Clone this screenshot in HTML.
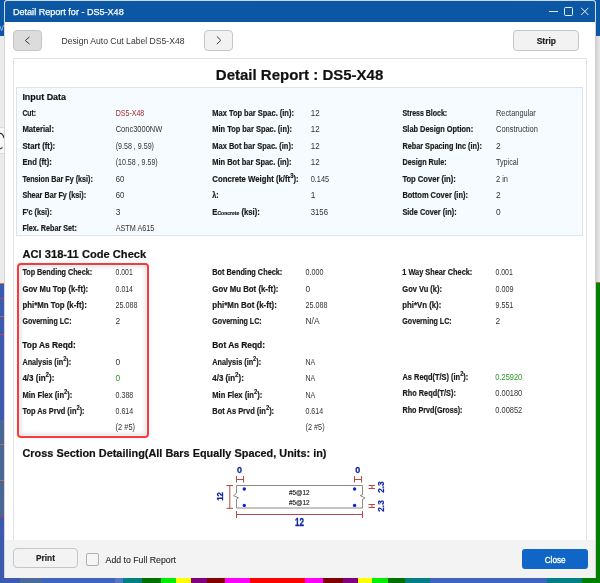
<!DOCTYPE html><html><head><meta charset="utf-8"><style>
*{margin:0;padding:0;box-sizing:border-box}
html,body{width:600px;height:583px;overflow:hidden;background:#ebebeb;font-family:"Liberation Sans",sans-serif;position:relative}
div,svg{position:absolute}
.btn{border:1px solid #c6c6c6;border-radius:4px;background:#f2f2f2}
text{font-family:"Liberation Sans",sans-serif}
</style></head><body>
<div style="left:0;top:0;width:600px;height:36px;background:#0c57a4"></div>
<div style="left:0;top:283px;width:6px;height:300px;background:#3b5bb0;border-top:1px solid #d08040"></div>
<div style="left:0;top:420px;width:6px;height:96px;background:#4a6694"></div>
<div style="left:0;top:298px;width:6px;height:1px;background:#c04050"></div>
<div style="left:0;top:316px;width:6px;height:1px;background:#c06040"></div>
<div style="left:0;top:334px;width:6px;height:1px;background:#c04050"></div>
<div style="left:0;top:444px;width:6px;height:1px;background:#b07040"></div>
<div style="left:0;top:480px;width:6px;height:1px;background:#c07040"></div>
<div style="left:0;top:516px;width:6px;height:1px;background:#d03040"></div>
<div style="left:0;top:127px;width:4px;height:27px;background:#f7f7f7;border-top:1px solid #dcdcdc;border-bottom:1px solid #dcdcdc"></div>
<svg style="left:0;top:20px" width="5" height="140"><path d="M0 6L1.6 11L3.6 5" stroke="#8fb0d8" stroke-width="1" fill="none"/><path d="M0 113.5Q2.5 113 4 118" stroke="#333" stroke-width="1.3" fill="none"/><path d="M0 129L2.5 127.5" stroke="#444" stroke-width="1.2" fill="none"/></svg>
<div style="left:596px;top:36px;width:4px;height:246px;background:linear-gradient(to right,#d2d2d2,#e9e9e9)"></div>
<div style="left:594px;top:282px;width:6px;height:301px;background:#008000;border-top:1px solid #e05050"></div>
<div style="left:4px;top:0px;width:592px;height:579px;background:#fff;border:1px solid rgba(190,210,235,0.8);border-bottom:none;border-radius:3px 3px 0 0"></div>
<div style="left:4px;top:22px;width:1px;height:556px;background:#d6d6d6"></div>
<div style="left:595px;top:22px;width:1px;height:556px;background:#d0d0d0"></div>
<div style="left:5px;top:1px;width:590px;height:21px;background:#0c57a4;border-radius:2px 2px 0 0"></div>
<div style="left:549px;top:11px;width:9px;height:1px;background:rgba(255,255,255,0.85)"></div>
<div style="left:564px;top:7px;width:9px;height:9px;border:1px solid rgba(255,255,255,0.9);border-radius:1.5px"></div>
<svg style="left:580px;top:7px" width="10" height="10"><path d="M1.2 0.8L8.4 8M8.4 0.8L1.2 8" stroke="rgba(255,255,255,0.9)" stroke-width="1"/></svg>
<div class="btn" style="left:13px;top:30px;width:29px;height:21px;background:#dcdcdc"></div>
<svg style="left:23px;top:35px" width="8" height="11"><path d="M6.5 1.9L2.3 5.5L6.5 9.1" stroke="#3a3a3a" stroke-width="1" fill="none"/></svg>
<div class="btn" style="left:204px;top:30px;width:29px;height:21px"></div>
<svg style="left:215px;top:35px" width="8" height="11"><path d="M1.9 1.5L5.8 5.3L1.9 9.1" stroke="#3a3a3a" stroke-width="1" fill="none"/></svg>
<div class="btn" style="left:513px;top:30px;width:66px;height:21px"></div>
<div style="left:13px;top:58px;width:574px;height:482px;border:1px solid #e3e3e3;border-bottom:none"></div>
<div style="left:16px;top:87px;width:567px;height:149px;background:#f5fbfe;border:1px solid #dfe3e6"></div>
<div style="left:16.7px;top:262.7px;width:132.6px;height:175.3px;border:2px solid #f83a3a;border-radius:4px;box-shadow:inset 0 0 0 1px #edf6f6,inset 0 0 5px 1px rgba(0,0,0,0.17),0 0 4px rgba(0,0,0,0.07)"></div>
<div style="left:5px;top:540px;width:590px;height:38px;background:#f3f3f3"></div>
<div class="btn" style="left:13px;top:548px;width:65px;height:20px;background:#f3f3f3"></div>
<div style="left:86px;top:553px;width:13px;height:13px;border:1px solid #b0b0b0;border-radius:2px;background:#f5f5f5"></div>
<div style="left:522px;top:549px;width:66px;height:20px;background:#1066c6;border-radius:3px"></div>
<div style="left:0px;top:578px;width:20px;height:5px;background:#3b5bb0"></div>
<div style="left:20px;top:578px;width:22px;height:5px;background:#4a6a98"></div>
<div style="left:42px;top:578px;width:73px;height:5px;background:#4062c0"></div>
<div style="left:115px;top:578px;width:8px;height:5px;background:#5575c8"></div>
<div style="left:123px;top:578px;width:19px;height:5px;background:#008080"></div>
<div style="left:142px;top:578px;width:19px;height:5px;background:#007000"></div>
<div style="left:161px;top:578px;width:15px;height:5px;background:#00ee00"></div>
<div style="left:176px;top:578px;width:15px;height:5px;background:#ffff00"></div>
<div style="left:191px;top:578px;width:16px;height:5px;background:#800080"></div>
<div style="left:207px;top:578px;width:18px;height:5px;background:#800000"></div>
<div style="left:225px;top:578px;width:25px;height:5px;background:#ff00ff"></div>
<div style="left:250px;top:578px;width:55px;height:5px;background:#ff0000"></div>
<div style="left:305px;top:578px;width:18px;height:5px;background:#ff00ff"></div>
<div style="left:323px;top:578px;width:20px;height:5px;background:#800000"></div>
<div style="left:343px;top:578px;width:15px;height:5px;background:#800080"></div>
<div style="left:358px;top:578px;width:14px;height:5px;background:#ffff00"></div>
<div style="left:372px;top:578px;width:16px;height:5px;background:#00ee00"></div>
<div style="left:388px;top:578px;width:17px;height:5px;background:#007000"></div>
<div style="left:405px;top:578px;width:25px;height:5px;background:#008080"></div>
<div style="left:430px;top:578px;width:117px;height:5px;background:#4062c0"></div>
<div style="left:547px;top:578px;width:35px;height:5px;background:#008080"></div>
<div style="left:582px;top:578px;width:18px;height:5px;background:#008000"></div>
<svg style="left:0;top:0;will-change:transform" width="600" height="583" viewBox="0 0 600 583"><text x="13" y="15" font-size="9.2" fill="#fff" textLength="110.7" lengthAdjust="spacingAndGlyphs" stroke="#fff" stroke-width="0.25">Detail Report for - DS5-X48</text>
<text x="61.5" y="44" font-size="8.8" fill="#333" textLength="123" lengthAdjust="spacingAndGlyphs" >Design Auto Cut Label DS5-X48</text>
<text x="536.7" y="43.5" font-size="9" fill="#222" font-weight="bold" stroke="#222" stroke-width="0.2" textLength="19.3" lengthAdjust="spacingAndGlyphs" >Strip</text>
<text x="215.8" y="80" font-size="15" fill="#111" font-weight="bold" stroke="#111" stroke-width="0.2" textLength="167.5" lengthAdjust="spacingAndGlyphs" >Detail Report : DS5-X48</text>
<text x="22.4" y="100" font-size="9.5" fill="#111" font-weight="bold" stroke="#111" stroke-width="0.2" textLength="43.6" lengthAdjust="spacingAndGlyphs" >Input Data</text>
<text x="22.4" y="116" font-size="8.4" fill="#1b1b1b" font-weight="bold" stroke="#1b1b1b" stroke-width="0.2" textLength="13.7" lengthAdjust="spacingAndGlyphs" >Cut:</text>
<text x="115.7" y="116" font-size="8.4" fill="#a03030" textLength="28.6" lengthAdjust="spacingAndGlyphs" >DS5-X48</text>
<text x="22.4" y="132" font-size="8.4" fill="#1b1b1b" font-weight="bold" stroke="#1b1b1b" stroke-width="0.2" textLength="31.7" lengthAdjust="spacingAndGlyphs" >Material:</text>
<text x="115.7" y="132" font-size="8.4" fill="#333333" textLength="46.6" lengthAdjust="spacingAndGlyphs" >Conc3000NW</text>
<text x="22.4" y="149" font-size="8.4" fill="#1b1b1b" font-weight="bold" stroke="#1b1b1b" stroke-width="0.2" textLength="32.7" lengthAdjust="spacingAndGlyphs" >Start (ft):</text>
<text x="115.7" y="149" font-size="8.4" fill="#333333" textLength="38.3" lengthAdjust="spacingAndGlyphs" >(9.58 , 9.59)</text>
<text x="22.4" y="165" font-size="8.4" fill="#1b1b1b" font-weight="bold" stroke="#1b1b1b" stroke-width="0.2" textLength="29.4" lengthAdjust="spacingAndGlyphs" >End (ft):</text>
<text x="115.7" y="165" font-size="8.4" fill="#333333" textLength="42" lengthAdjust="spacingAndGlyphs" >(10.58 , 9.59)</text>
<text x="22.4" y="182" font-size="8.4" fill="#1b1b1b" font-weight="bold" stroke="#1b1b1b" stroke-width="0.2" textLength="70.4" lengthAdjust="spacingAndGlyphs" >Tension Bar Fy (ksi):</text>
<text x="115.7" y="182" font-size="8.4" fill="#333333" textLength="8.6" lengthAdjust="spacingAndGlyphs" >60</text>
<text x="22.4" y="198" font-size="8.4" fill="#1b1b1b" font-weight="bold" stroke="#1b1b1b" stroke-width="0.2" textLength="63.7" lengthAdjust="spacingAndGlyphs" >Shear Bar Fy (ksi):</text>
<text x="115.7" y="198" font-size="8.4" fill="#333333" textLength="8.6" lengthAdjust="spacingAndGlyphs" >60</text>
<text x="22.4" y="215" font-size="8.4" fill="#1b1b1b" font-weight="bold" stroke="#1b1b1b" stroke-width="0.2" textLength="29.4" lengthAdjust="spacingAndGlyphs" >F'c (ksi):</text>
<text x="115.7" y="215" font-size="8.4" fill="#333333" >3</text>
<text x="22.4" y="231" font-size="8.4" fill="#1b1b1b" font-weight="bold" stroke="#1b1b1b" stroke-width="0.2" textLength="54.4" lengthAdjust="spacingAndGlyphs" >Flex. Rebar Set:</text>
<text x="115.7" y="231" font-size="8.4" fill="#333333" textLength="38.6" lengthAdjust="spacingAndGlyphs" >ASTM A615</text>
<text x="212.3" y="116" font-size="8.4" fill="#1b1b1b" font-weight="bold" stroke="#1b1b1b" stroke-width="0.2" textLength="81.6" lengthAdjust="spacingAndGlyphs" >Max Top bar Spac. (in):</text>
<text x="310.7" y="116" font-size="8.4" fill="#333333" textLength="8.9" lengthAdjust="spacingAndGlyphs" >12</text>
<text x="212.3" y="132" font-size="8.4" fill="#1b1b1b" font-weight="bold" stroke="#1b1b1b" stroke-width="0.2" textLength="79.6" lengthAdjust="spacingAndGlyphs" >Min Top bar Spac. (in):</text>
<text x="310.7" y="132" font-size="8.4" fill="#333333" textLength="8.9" lengthAdjust="spacingAndGlyphs" >12</text>
<text x="212.3" y="149" font-size="8.4" fill="#1b1b1b" font-weight="bold" stroke="#1b1b1b" stroke-width="0.2" textLength="81.1" lengthAdjust="spacingAndGlyphs" >Max Bot bar Spac. (in):</text>
<text x="310.7" y="149" font-size="8.4" fill="#333333" textLength="8.9" lengthAdjust="spacingAndGlyphs" >12</text>
<text x="212.3" y="165" font-size="8.4" fill="#1b1b1b" font-weight="bold" stroke="#1b1b1b" stroke-width="0.2" textLength="79.2" lengthAdjust="spacingAndGlyphs" >Min Bot bar Spac. (in):</text>
<text x="310.7" y="165" font-size="8.4" fill="#333333" textLength="8.9" lengthAdjust="spacingAndGlyphs" >12</text>
<text x="212.3" y="182" font-size="8.4" fill="#1b1b1b" font-weight="bold" stroke="#1b1b1b" stroke-width="0.2" textLength="86.4" lengthAdjust="spacingAndGlyphs" >Concrete Weight (k/ft<tspan font-size="6.5" dy="-4">3</tspan><tspan dy="4">):</tspan></text>
<text x="310.7" y="182" font-size="8.4" fill="#333333" textLength="18.5" lengthAdjust="spacingAndGlyphs" >0.145</text>
<text x="212.3" y="198" font-size="8.4" fill="#1b1b1b" font-weight="bold" stroke="#1b1b1b" stroke-width="0.2" textLength="6.4" lengthAdjust="spacingAndGlyphs" >&#955;:</text>
<text x="310.7" y="198" font-size="8.4" fill="#333333" >1</text>
<text x="212.3" y="215" font-size="8.4" fill="#1b1b1b" font-weight="bold" stroke="#1b1b1b" stroke-width="0.2" textLength="47.5" lengthAdjust="spacingAndGlyphs" >E<tspan font-size="5.5">Concrete</tspan> (ksi):</text>
<text x="310.7" y="215" font-size="8.4" fill="#333333" textLength="17.3" lengthAdjust="spacingAndGlyphs" >3156</text>
<text x="402.4" y="116" font-size="8.4" fill="#1b1b1b" font-weight="bold" stroke="#1b1b1b" stroke-width="0.2" textLength="44.8" lengthAdjust="spacingAndGlyphs" >Stress Block:</text>
<text x="496" y="116" font-size="8.4" fill="#333333" textLength="39.8" lengthAdjust="spacingAndGlyphs" >Rectangular</text>
<text x="402.4" y="132" font-size="8.4" fill="#1b1b1b" font-weight="bold" stroke="#1b1b1b" stroke-width="0.2" textLength="70.7" lengthAdjust="spacingAndGlyphs" >Slab Design Option:</text>
<text x="496" y="132" font-size="8.4" fill="#333333" textLength="41.9" lengthAdjust="spacingAndGlyphs" >Construction</text>
<text x="402.4" y="149" font-size="8.4" fill="#1b1b1b" font-weight="bold" stroke="#1b1b1b" stroke-width="0.2" textLength="79.5" lengthAdjust="spacingAndGlyphs" >Rebar Spacing Inc (in):</text>
<text x="496" y="149" font-size="8.4" fill="#333333" >2</text>
<text x="402.4" y="165" font-size="8.4" fill="#1b1b1b" font-weight="bold" stroke="#1b1b1b" stroke-width="0.2" textLength="44.3" lengthAdjust="spacingAndGlyphs" >Design Rule:</text>
<text x="496" y="165" font-size="8.4" fill="#333333" textLength="22.4" lengthAdjust="spacingAndGlyphs" >Typical</text>
<text x="402.4" y="182" font-size="8.4" fill="#1b1b1b" font-weight="bold" stroke="#1b1b1b" stroke-width="0.2" textLength="53.4" lengthAdjust="spacingAndGlyphs" >Top Cover (in):</text>
<text x="496" y="182" font-size="8.4" fill="#333333" textLength="12" lengthAdjust="spacingAndGlyphs" >2 in</text>
<text x="402.4" y="198" font-size="8.4" fill="#1b1b1b" font-weight="bold" stroke="#1b1b1b" stroke-width="0.2" textLength="65.6" lengthAdjust="spacingAndGlyphs" >Bottom Cover (in):</text>
<text x="496" y="198" font-size="8.4" fill="#333333" >2</text>
<text x="402.4" y="215" font-size="8.4" fill="#1b1b1b" font-weight="bold" stroke="#1b1b1b" stroke-width="0.2" textLength="54.2" lengthAdjust="spacingAndGlyphs" >Side Cover (in):</text>
<text x="496" y="215" font-size="8.4" fill="#333333" >0</text>
<text x="22.5" y="258" font-size="11.2" fill="#111" font-weight="bold" stroke="#111" stroke-width="0.2" textLength="123.7" lengthAdjust="spacingAndGlyphs" >ACI 318-11 Code Check</text>
<text x="22.4" y="275" font-size="8.4" fill="#1b1b1b" font-weight="bold" stroke="#1b1b1b" stroke-width="0.2" textLength="69.7" lengthAdjust="spacingAndGlyphs" >Top Bending Check:</text>
<text x="115.6" y="275" font-size="8.4" fill="#333333" textLength="17.1" lengthAdjust="spacingAndGlyphs" >0.001</text>
<text x="212.3" y="275" font-size="8.4" fill="#1b1b1b" font-weight="bold" stroke="#1b1b1b" stroke-width="0.2" textLength="70" lengthAdjust="spacingAndGlyphs" >Bot Bending Check:</text>
<text x="305.5" y="275" font-size="8.4" fill="#333333" textLength="18" lengthAdjust="spacingAndGlyphs" >0.000</text>
<text x="402.3" y="275" font-size="8.4" fill="#1b1b1b" font-weight="bold" stroke="#1b1b1b" stroke-width="0.2" textLength="70" lengthAdjust="spacingAndGlyphs" >1 Way Shear Check:</text>
<text x="495.5" y="275" font-size="8.4" fill="#333333" textLength="17.3" lengthAdjust="spacingAndGlyphs" >0.001</text>
<text x="22.4" y="292" font-size="8.4" fill="#1b1b1b" font-weight="bold" stroke="#1b1b1b" stroke-width="0.2" textLength="65.7" lengthAdjust="spacingAndGlyphs" >Gov Mu Top (k-ft):</text>
<text x="115.6" y="292" font-size="8.4" fill="#333333" textLength="17.4" lengthAdjust="spacingAndGlyphs" >0.014</text>
<text x="212.3" y="292" font-size="8.4" fill="#1b1b1b" font-weight="bold" stroke="#1b1b1b" stroke-width="0.2" textLength="66.1" lengthAdjust="spacingAndGlyphs" >Gov Mu Bot (k-ft):</text>
<text x="305.5" y="292" font-size="8.4" fill="#333333" >0</text>
<text x="402.3" y="292" font-size="8.4" fill="#1b1b1b" font-weight="bold" stroke="#1b1b1b" stroke-width="0.2" textLength="39.7" lengthAdjust="spacingAndGlyphs" >Gov Vu (k):</text>
<text x="495.5" y="292" font-size="8.4" fill="#333333" textLength="18" lengthAdjust="spacingAndGlyphs" >0.009</text>
<text x="22.4" y="308" font-size="8.4" fill="#1b1b1b" font-weight="bold" stroke="#1b1b1b" stroke-width="0.2" textLength="64.4" lengthAdjust="spacingAndGlyphs" >phi*Mn Top (k-ft):</text>
<text x="115.6" y="308" font-size="8.4" fill="#333333" textLength="21.9" lengthAdjust="spacingAndGlyphs" >25.088</text>
<text x="212.3" y="308" font-size="8.4" fill="#1b1b1b" font-weight="bold" stroke="#1b1b1b" stroke-width="0.2" textLength="64.6" lengthAdjust="spacingAndGlyphs" >phi*Mn Bot (k-ft):</text>
<text x="305.5" y="308" font-size="8.4" fill="#333333" textLength="22.1" lengthAdjust="spacingAndGlyphs" >25.088</text>
<text x="402.3" y="308" font-size="8.4" fill="#1b1b1b" font-weight="bold" stroke="#1b1b1b" stroke-width="0.2" textLength="39" lengthAdjust="spacingAndGlyphs" >phi*Vn (k):</text>
<text x="495.5" y="308" font-size="8.4" fill="#333333" textLength="17.8" lengthAdjust="spacingAndGlyphs" >9.551</text>
<text x="22.4" y="324" font-size="8.4" fill="#1b1b1b" font-weight="bold" stroke="#1b1b1b" stroke-width="0.2" textLength="49.1" lengthAdjust="spacingAndGlyphs" >Governing LC:</text>
<text x="115.6" y="324" font-size="8.4" fill="#333333" >2</text>
<text x="212.3" y="324" font-size="8.4" fill="#1b1b1b" font-weight="bold" stroke="#1b1b1b" stroke-width="0.2" textLength="49.4" lengthAdjust="spacingAndGlyphs" >Governing LC:</text>
<text x="305.5" y="324" font-size="8.4" fill="#333333" textLength="14.1" lengthAdjust="spacingAndGlyphs" >N/A</text>
<text x="402.3" y="324" font-size="8.4" fill="#1b1b1b" font-weight="bold" stroke="#1b1b1b" stroke-width="0.2" textLength="49.4" lengthAdjust="spacingAndGlyphs" >Governing LC:</text>
<text x="495.5" y="324" font-size="8.4" fill="#333333" >2</text>
<text x="22.3" y="348.2" font-size="9" fill="#111" font-weight="bold" stroke="#111" stroke-width="0.2" textLength="53.4" lengthAdjust="spacingAndGlyphs" >Top As Reqd:</text>
<text x="212.3" y="348.2" font-size="9" fill="#111" font-weight="bold" stroke="#111" stroke-width="0.2" textLength="52.7" lengthAdjust="spacingAndGlyphs" >Bot As Reqd:</text>
<text x="22.4" y="365" font-size="8.4" fill="#1b1b1b" font-weight="bold" stroke="#1b1b1b" stroke-width="0.2" textLength="48.7" lengthAdjust="spacingAndGlyphs" >Analysis (in<tspan font-size="6.5" dy="-4">2</tspan><tspan dy="4">):</tspan></text>
<text x="115.6" y="365" font-size="8.4" fill="#333333" >0</text>
<text x="212.3" y="365" font-size="8.4" fill="#1b1b1b" font-weight="bold" stroke="#1b1b1b" stroke-width="0.2" textLength="48.8" lengthAdjust="spacingAndGlyphs" >Analysis (in<tspan font-size="6.5" dy="-4">2</tspan><tspan dy="4">):</tspan></text>
<text x="305.5" y="365" font-size="8.4" fill="#333333" textLength="9.8" lengthAdjust="spacingAndGlyphs" >NA</text>
<text x="22.4" y="381" font-size="8.4" fill="#1b1b1b" font-weight="bold" stroke="#1b1b1b" stroke-width="0.2" textLength="32" lengthAdjust="spacingAndGlyphs" >4/3 (in<tspan font-size="6.5" dy="-4">2</tspan><tspan dy="4">):</tspan></text>
<text x="115.6" y="381" font-size="8.4" fill="#2a9a2a" >0</text>
<text x="212.3" y="381" font-size="8.4" fill="#1b1b1b" font-weight="bold" stroke="#1b1b1b" stroke-width="0.2" textLength="31.5" lengthAdjust="spacingAndGlyphs" >4/3 (in<tspan font-size="6.5" dy="-4">2</tspan><tspan dy="4">):</tspan></text>
<text x="305.5" y="381" font-size="8.4" fill="#333333" textLength="9.8" lengthAdjust="spacingAndGlyphs" >NA</text>
<text x="22.4" y="398" font-size="8.4" fill="#1b1b1b" font-weight="bold" stroke="#1b1b1b" stroke-width="0.2" textLength="50" lengthAdjust="spacingAndGlyphs" >Min Flex (in<tspan font-size="6.5" dy="-4">2</tspan><tspan dy="4">):</tspan></text>
<text x="115.6" y="398" font-size="8.4" fill="#333333" textLength="17.7" lengthAdjust="spacingAndGlyphs" >0.388</text>
<text x="212.3" y="398" font-size="8.4" fill="#1b1b1b" font-weight="bold" stroke="#1b1b1b" stroke-width="0.2" textLength="49.9" lengthAdjust="spacingAndGlyphs" >Min Flex (in<tspan font-size="6.5" dy="-4">2</tspan><tspan dy="4">):</tspan></text>
<text x="305.5" y="398" font-size="8.4" fill="#333333" textLength="9.8" lengthAdjust="spacingAndGlyphs" >NA</text>
<text x="22.4" y="414" font-size="8.4" fill="#1b1b1b" font-weight="bold" stroke="#1b1b1b" stroke-width="0.2" textLength="62.2" lengthAdjust="spacingAndGlyphs" >Top As Prvd (in<tspan font-size="6.5" dy="-4">2</tspan><tspan dy="4">):</tspan></text>
<text x="115.6" y="414" font-size="8.4" fill="#333333" textLength="17.6" lengthAdjust="spacingAndGlyphs" >0.614</text>
<text x="212.3" y="414" font-size="8.4" fill="#1b1b1b" font-weight="bold" stroke="#1b1b1b" stroke-width="0.2" textLength="61.8" lengthAdjust="spacingAndGlyphs" >Bot As Prvd (in<tspan font-size="6.5" dy="-4">2</tspan><tspan dy="4">):</tspan></text>
<text x="305.5" y="414" font-size="8.4" fill="#333333" textLength="17.6" lengthAdjust="spacingAndGlyphs" >0.614</text>
<text x="115.6" y="430" font-size="8.4" fill="#333333" textLength="19.4" lengthAdjust="spacingAndGlyphs" >(2 #5)</text>
<text x="305.5" y="430" font-size="8.4" fill="#333333" textLength="19.1" lengthAdjust="spacingAndGlyphs" >(2 #5)</text>
<text x="402.5" y="380" font-size="8.4" fill="#1b1b1b" font-weight="bold" stroke="#1b1b1b" stroke-width="0.2" textLength="65.8" lengthAdjust="spacingAndGlyphs" >As Reqd(T/S) (in<tspan font-size="6.5" dy="-4">2</tspan><tspan dy="4">):</tspan></text>
<text x="495.3" y="380" font-size="8.4" fill="#2a9a2a" textLength="26.9" lengthAdjust="spacingAndGlyphs" >0.25920</text>
<text x="402.5" y="396" font-size="8.4" fill="#1b1b1b" font-weight="bold" stroke="#1b1b1b" stroke-width="0.2" textLength="53.4" lengthAdjust="spacingAndGlyphs" >Rho Reqd(T/S):</text>
<text x="495.3" y="396" font-size="8.4" fill="#333333" textLength="26.9" lengthAdjust="spacingAndGlyphs" >0.00180</text>
<text x="402.5" y="413" font-size="8.4" fill="#1b1b1b" font-weight="bold" stroke="#1b1b1b" stroke-width="0.2" textLength="60" lengthAdjust="spacingAndGlyphs" >Rho Prvd(Gross):</text>
<text x="495.3" y="413" font-size="8.4" fill="#333333" textLength="26.9" lengthAdjust="spacingAndGlyphs" >0.00852</text>
<text x="22.5" y="457.3" font-size="11.2" fill="#111" font-weight="bold" stroke="#111" stroke-width="0.2" textLength="304" lengthAdjust="spacingAndGlyphs" >Cross Section Detailing(All Bars Equally Spaced, Units: in)</text>
<text x="36" y="560.7" font-size="9" fill="#222" font-weight="bold" stroke="#222" stroke-width="0.2" textLength="19" lengthAdjust="spacingAndGlyphs" >Print</text>
<text x="105.6" y="562.6" font-size="8.7" fill="#2a2a2a" textLength="70.4" lengthAdjust="spacingAndGlyphs" stroke="#2a2a2a" stroke-width="0.12">Add to Full Report</text>
<text x="544.7" y="562.5" font-size="9.2" fill="#fff" textLength="21" lengthAdjust="spacingAndGlyphs" stroke="#fff" stroke-width="0.3">Close</text>
<path d="M236.5 485.5H362.5V494.9L360 495.5L365.1 498L362.5 499.3V508H236.5V499.2L238.5 497.9L233.5 495.7L236.5 493.2Z" fill="none" stroke="#8a8a8a" stroke-width="1"/>
<circle cx="244.3" cy="489" r="1.7" fill="#1020d0"/><circle cx="244.3" cy="505.4" r="1.7" fill="#1020d0"/>
<circle cx="354.6" cy="489" r="1.7" fill="#1020d0"/><circle cx="354.6" cy="505.4" r="1.7" fill="#1020d0"/>
<g stroke="#b64848" stroke-width="1" fill="none">
<path d="M229.8 485.5V508.3M226.4 485.5H233M226.4 508.3H233"/>
<path d="M236.5 479.5H243.5M236.5 476V482.5M243.5 476V482.5"/>
<path d="M354.5 479.5H361.5M354.5 476V482.5M361.5 476V482.5"/>
<path d="M236.5 514.5H362.5M236.5 511V518M362.5 511V518"/>
<path d="M368.5 485.5H375M368.5 488.5H375M372 485.5V488.5"/>
<path d="M368.5 504.5H375M368.5 507.5H375M372 504.5V507.5"/>
</g>
<text x="239.6" y="473" font-size="9.5" font-weight="bold" fill="#1428a0" stroke="#1428a0" stroke-width="0.3" text-anchor="middle" textLength="5" lengthAdjust="spacingAndGlyphs">0</text>
<text x="357.7" y="473" font-size="9.5" font-weight="bold" fill="#1428a0" stroke="#1428a0" stroke-width="0.3" text-anchor="middle" textLength="5" lengthAdjust="spacingAndGlyphs">0</text>
<text x="299.5" y="526" font-size="10" font-weight="bold" fill="#1428a0" stroke="#1428a0" stroke-width="0.3" text-anchor="middle" textLength="9" lengthAdjust="spacingAndGlyphs">12</text>
<text transform="translate(223,496.4) rotate(-90)" font-size="9.6" font-weight="bold" fill="#1428a0" stroke="#1428a0" stroke-width="0.3" text-anchor="middle" textLength="8.8" lengthAdjust="spacingAndGlyphs">12</text>
<text transform="translate(384,487.1) rotate(-90)" font-size="9.4" font-weight="bold" fill="#1428a0" stroke="#1428a0" stroke-width="0.2" text-anchor="middle" textLength="11.5" lengthAdjust="spacingAndGlyphs">2.3</text>
<text transform="translate(384,506) rotate(-90)" font-size="9.4" font-weight="bold" fill="#1428a0" stroke="#1428a0" stroke-width="0.2" text-anchor="middle" textLength="11.5" lengthAdjust="spacingAndGlyphs">2.3</text>
<text x="299.3" y="495.2" font-size="6.8" fill="#222" stroke="#222" stroke-width="0.15" text-anchor="middle" textLength="20.6" lengthAdjust="spacingAndGlyphs">#5@12</text>
<text x="299.3" y="504.8" font-size="6.8" fill="#222" stroke="#222" stroke-width="0.15" text-anchor="middle" textLength="20.6" lengthAdjust="spacingAndGlyphs">#5@12</text>
</svg>
</body></html>
